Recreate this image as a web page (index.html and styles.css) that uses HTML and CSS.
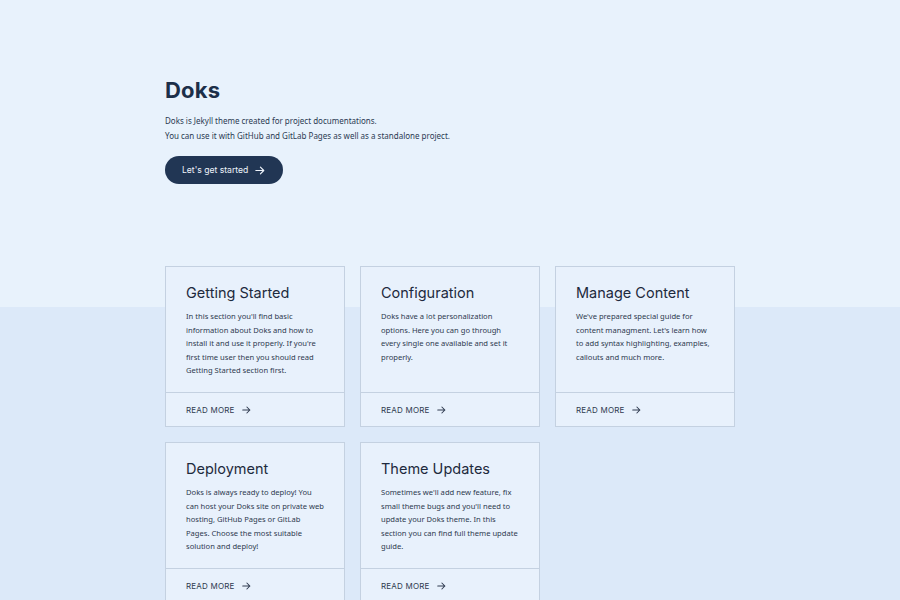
FILE: index.html
```html
<!DOCTYPE html>
<html>
<head>
<meta charset="utf-8">
<link rel="stylesheet" href="styles.css">
</head>
<body>
<div class="page">
  <section class="hero">
    <div class="container">
      <h1 class="hero-title">Doks</h1>
      <p class="hero-text">Doks is Jekyll theme created for project documentations.<br>You can use it with GitHub and GitLab Pages as well as a standalone project.</p>
      <a class="btn" href="#">Let's get started <svg class="arrow" viewBox="0 0 12 10" width="10" height="9"><path d="M1 5h9.5M6.5 1l4 4-4 4" fill="none" stroke="currentColor" stroke-width="1.4" stroke-linecap="round" stroke-linejoin="round"/></svg></a>
    </div>
  </section>
  <section class="features">
    <div class="container grid">
      <div class="card">
        <div class="card-body">
          <h2 class="card-title">Getting Started</h2>
          <p class="card-text">In this section you'll find basic information about Doks and how to install it and use it properly. If you're first time user then you should read Getting Started section first.</p>
        </div>
        <div class="card-foot"><span>READ MORE</span><svg class="arrow" viewBox="0 0 12 10" width="9" height="8"><path d="M1 5h9.5M6.5 1l4 4-4 4" fill="none" stroke="currentColor" stroke-width="1.4" stroke-linecap="round" stroke-linejoin="round"/></svg></div>
      </div>
      <div class="card">
        <div class="card-body">
          <h2 class="card-title">Configuration</h2>
          <p class="card-text">Doks have a lot personalization options. Here you can go through every single one available and set it properly.</p>
        </div>
        <div class="card-foot"><span>READ MORE</span><svg class="arrow" viewBox="0 0 12 10" width="9" height="8"><path d="M1 5h9.5M6.5 1l4 4-4 4" fill="none" stroke="currentColor" stroke-width="1.4" stroke-linecap="round" stroke-linejoin="round"/></svg></div>
      </div>
      <div class="card">
        <div class="card-body">
          <h2 class="card-title">Manage Content</h2>
          <p class="card-text">We've prepared special guide for content managment. Let's learn how to add syntax highlighting, examples, callouts and much more.</p>
        </div>
        <div class="card-foot"><span>READ MORE</span><svg class="arrow" viewBox="0 0 12 10" width="9" height="8"><path d="M1 5h9.5M6.5 1l4 4-4 4" fill="none" stroke="currentColor" stroke-width="1.4" stroke-linecap="round" stroke-linejoin="round"/></svg></div>
      </div>
      <div class="card">
        <div class="card-body">
          <h2 class="card-title">Deployment</h2>
          <p class="card-text">Doks is always ready to deploy! You can host your Doks site on private web hosting, GitHub Pages or GitLab Pages. Choose the most suitable solution and deploy!</p>
        </div>
        <div class="card-foot"><span>READ MORE</span><svg class="arrow" viewBox="0 0 12 10" width="9" height="8"><path d="M1 5h9.5M6.5 1l4 4-4 4" fill="none" stroke="currentColor" stroke-width="1.4" stroke-linecap="round" stroke-linejoin="round"/></svg></div>
      </div>
      <div class="card">
        <div class="card-body">
          <h2 class="card-title">Theme Updates</h2>
          <p class="card-text">Sometimes we'll add new feature, fix small theme bugs and you'll need to update your Doks theme. In this section you can find full theme update guide.</p>
        </div>
        <div class="card-foot"><span>READ MORE</span><svg class="arrow" viewBox="0 0 12 10" width="9" height="8"><path d="M1 5h9.5M6.5 1l4 4-4 4" fill="none" stroke="currentColor" stroke-width="1.4" stroke-linecap="round" stroke-linejoin="round"/></svg></div>
      </div>
    </div>
  </section>
</div>
</body>
</html>
```
FILE: styles.css
```css
* { box-sizing: border-box; }
html, body { margin: 0; padding: 0; }
body {
  background: #dce9f9;
  font-family: "Noto Sans", sans-serif;
  color: #2e3b50;
}
.page { min-height: 600px; }
.container { width: 570px; margin: 0 auto; }
.hero {
  background: #e8f2fc;
  padding-top: 77px;
  height: 307px;
}
.hero-title {
  margin: 0;
  font-family: "Inter", sans-serif;
  font-weight: 700;
  font-size: 22px;
  line-height: 26px;
  color: #1c2f49;
  letter-spacing: 0.2px;
}
.hero-text {
  margin: 10px 0 0;
  font-size: 8px;
  line-height: 15px;
  color: #2b3a52;
}
.btn {
  margin-top: 13px;
  display: inline-flex;
  align-items: center;
  gap: 7px;
  height: 28px;
  padding: 0 18px 0 17px;
  border-radius: 14px;
  background: #213654;
  color: #eef3fa;
  text-decoration: none;
  font-family: "Inter", sans-serif;
  font-size: 8.6px;
}
.features {
  margin-top: -41px;
}
.grid {
  display: grid;
  grid-template-columns: repeat(3, 180px);
  gap: 15px;
}
.card {
  background: #e8f1fc;
  border: 1px solid #c4d1e1;
  display: flex;
  flex-direction: column;
  height: 161px;
}
.card-body {
  flex: 1;
  padding: 16px 20px 0;
}
.card-title {
  margin: 0;
  font-family: "Inter", sans-serif;
  font-weight: 400;
  font-size: 14.5px;
  line-height: 20px;
  color: #1d2a3d;
}
.card-text {
  margin: 7px 0 0;
  font-size: 7.6px;
  line-height: 13.6px;
  color: #2e3a4f;
}
.card-foot {
  height: 34px;
  border-top: 1px solid #c4d1e1;
  display: flex;
  align-items: center;
  gap: 7px;
  padding: 0 20px;
  font-family: "Inter", sans-serif;
  font-size: 8px;
  letter-spacing: 0.2px;
  color: #2e3a4f;
}
.arrow { display: block; }
```
